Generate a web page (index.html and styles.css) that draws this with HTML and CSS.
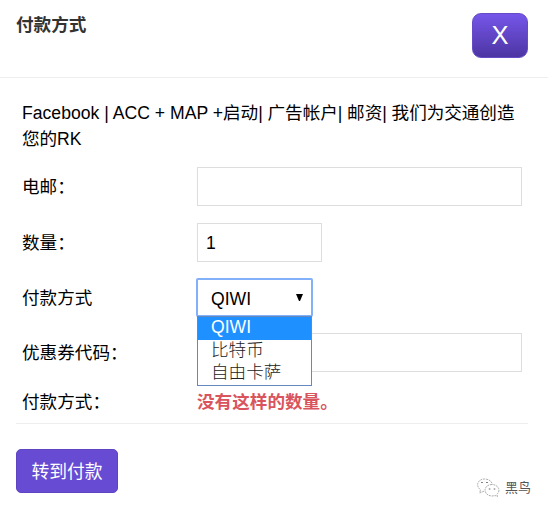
FILE: index.html
```html
<!DOCTYPE html>
<html lang="zh-CN">
<head>
<meta charset="utf-8">
<title>付款方式</title>
<link rel="stylesheet" href="styles.css">
</head>
<body>
<header class="header">
  <h1 class="title">付款方式</h1>
  <button class="close"><span class="cross">X</span></button>
</header>
<main class="body">
  <p class="product"><span class="latin">Facebook | ACC + MAP +</span>启动| 广告帐户| 邮资| 我们为交通创造<br>您的RK</p>
  <div class="row"><label>电邮：</label><div class="field"></div></div>
  <div class="row"><label>数量：</label><div class="field short">1</div></div>
  <div class="row pay"><label>付款方式</label>
    <div class="select"><span>QIWI</span>
      <svg class="arrow" width="7" height="7" viewBox="0 0 7 7"><path d="M0 0h7L4 7H3z"/></svg>
      <ul class="menu"><li class="active">QIWI</li><li>比特币</li><li>自由卡萨</li></ul>
    </div>
  </div>
  <div class="row coupon"><label>优惠券代码：</label><div class="field"></div></div>
  <div class="row status"><label>付款方式：</label><strong class="error">没有这样的数量。</strong></div>
</main>
<footer class="footer">
  <button class="submit">转到付款</button>
  <div class="mark">
    <svg width="24" height="20" viewBox="0 0 24 20" fill="none" stroke="#999" stroke-width=".8" stroke-dasharray="2 .8">
      <path d="M8 13.2 3.7 15l.8-3.2C-1 7.500 2 1 8.500 1c4 0 7 2 7.800 5"/>
      <path d="M16 6.500c-9 0-9.500 11 0 11.500 1.200 0 2-.2 3-.5l2.500 1-.7-2.200c4.500-3.500 1.500-9.800-4.800-9.800z"/>
      <path d="M5.200 4.500h1.600M10.200 4.500h1.600M12.800 11h1.600M17.700 11h1.600" stroke="#666" stroke-width="1" stroke-dasharray="none"/>
    </svg>
    <span>黑鸟</span>
  </div>
</footer>
</body>
</html>
```
FILE: styles.css
```css
* { box-sizing: border-box; }
body {
  margin: 0;
  background: #fff;
  color: #000;
  font: 17.6px/26px "Liberation Sans", "Noto Sans CJK SC", sans-serif;
}
button { border: 0; padding: 0; font-family: inherit; color: #fff; }
.header {
  display: flex;
  justify-content: space-between;
  align-items: flex-start;
  height: 78px;
  padding: 13px 20px 0 16px;
  border-bottom: 1px solid #eee;
}
.title { margin: 0; font-size: 17.6px; line-height: 24px; color: #333; }
.close {
  width: 56px;
  height: 45px;
  border: 1px solid #654bc6;
  border-radius: 9px;
  background: linear-gradient(#7556e9, #4d35a3);
  font-size: 25.5px;
  line-height: 43px;
}
.cross { display: block; }
.body {
  margin: 0 20px 0 16px;
  padding: 22px 6px 0;
  height: 346px;
  border-bottom: 1px solid #eee;
}
.product { margin: 0 0 15px; white-space: nowrap; letter-spacing: -.04px; }
.latin { letter-spacing: .01px; }
.row {
  display: grid;
  grid-template-columns: 175px 1fr;
  align-items: center;
  height: 39px;
  margin-bottom: 17px;
}
.field { height: 39px; padding-left: 8px; border: 1px solid #ddd; line-height: 38px; }
.short { width: 125px; }
.row.pay { height: 38px; margin-bottom: 16px; }
.select {
  position: relative;
  display: flex;
  align-items: center;
  justify-content: space-between;
  width: 117px;
  height: 39px;
  margin: -1px 0 0 -1px;
  padding: 2px 10px 0 13px;
  border: 2px solid #82b1fa;
  border-radius: 2px;
}
.arrow { margin-bottom: 3px; margin-right: -2px; }
.menu {
  position: absolute;
  z-index: 1;
  top: 36px;
  left: -1px;
  width: 115px;
  height: 70px;
  margin: 0;
  padding: 0;
  border: 1px solid #6688c0;
  background: #fff;
  list-style: none;
  line-height: 22px;
  color: #222;
}
.menu li { height: 22px; padding-left: 13px; font-weight: 300; }
.menu .active { height: 23px; background: #1e90ff; color: #fff; font-weight: 400; line-height: 21px; }
.menu li + li { position: relative; top: -1px; }
.row.coupon { margin-bottom: 17px; }
.row.status { height: 26px; margin: 0; }
.error { color: #d9545d; }
.footer {
  display: flex;
  justify-content: space-between;
  align-items: flex-start;
  padding: 25px 17px 0 16px;
}
.submit {
  width: 102px;
  height: 44px;
  border: 1px solid #5f45c2;
  border-radius: 5px;
  background: #684bd3;
  font-size: 17.8px;
  line-height: 44px;
}
.mark {
  display: flex;
  align-items: center;
  gap: 5px;
  margin-top: 29px;
  font-size: 13px;
  line-height: 20px;
  color: #555;
}
```
